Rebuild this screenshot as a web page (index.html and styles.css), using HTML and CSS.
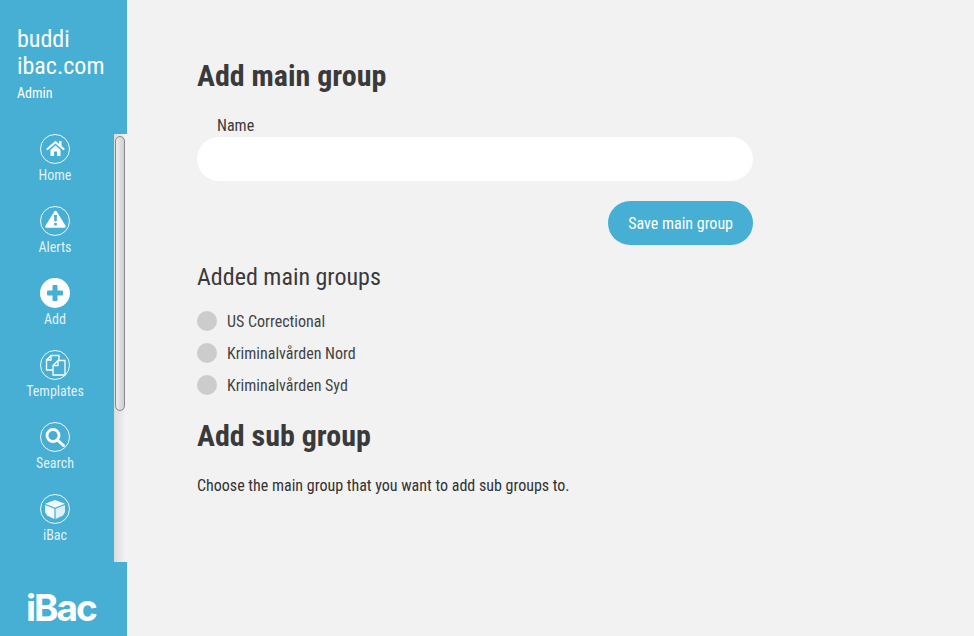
FILE: index.html
```html
<!DOCTYPE html>
<html lang="en">
<head>
    <meta charset="UTF-8">
    <title>Add main group</title>
    <link rel="stylesheet" href="styles.css">
</head>
<body>
    <aside class="sidebar">
        <div class="account">
            <div class="account-name">buddi<br>ibac.com</div>
            <div class="account-role">Admin</div>
        </div>
        <nav class="menu">
            <a class="menu-item"><span class="menu-icon"><svg viewBox="0 0 28 28"><path fill="none" stroke="#fff" stroke-width="2.200" stroke-linecap="round" d="M6.500 14 14.500 7.200 22.500 14"/><path fill="#fff" d="M18 6h2.500v5.500L18 9.500z"/><path fill="#fff" d="M9.500 15 14.500 10.500 19.500 15v6h-3.500v-4.500h-3V21H9.500z"/></svg></span><span>Home</span></a>
            <a class="menu-item"><span class="menu-icon"><svg viewBox="0 0 28 28"><path fill="#fff" stroke="#fff" stroke-width="2.500" stroke-linejoin="round" d="M14.500 5 23.500 19.500H5.500z"/><path fill="#47afd3" d="M13 8h3l-.4 6.500h-2.200zM13.200 16h2.600v2.600h-2.600z"/></svg></span><span>Alerts</span></a>
            <a class="menu-item"><span class="menu-icon menu-icon-active"><svg viewBox="0 0 28 28"><rect fill="#47afd3" x="6" y="11.500" width="16" height="5" rx="1"/><rect fill="#47afd3" x="11.500" y="6" width="5" height="16" rx="1"/></svg></span><span>Add</span></a>
            <a class="menu-item"><span class="menu-icon"><svg viewBox="0 0 28 28" fill="none" stroke="#fff" stroke-width="1.300"><path d="M12 19H5.500V9L10 4.500h8V9.500"/><path d="M10 4.500V9H5.500"/><path d="M17 9.500h7V24H12V14.500z"/><path d="M17 9.500v5h-5"/></svg></span><span>Templates</span></a>
            <a class="menu-item"><span class="menu-icon"><svg viewBox="0 0 28 28" fill="none" stroke="#fff"><circle cx="12" cy="12.500" r="6" stroke-width="2.800"/><path d="m17 17.500 5.500 5" stroke-width="3" stroke-linecap="round"/></svg></span><span>Search</span></a>
            <a class="menu-item"><span class="menu-icon"><svg viewBox="0 0 28 28" fill="#f2f9fc"><path d="M14 5 24 8.800 14 12.800 4 8.800z"/><path d="M4 10 13.400 13.800V24L6 20.500 4 17z"/><path fill="#dff0f7" d="M24 10 14.600 13.800V24L22 20.500 24 17z"/></svg></span><span>iBac</span></a>
        </nav>
        <div class="menu-track"><div class="menu-thumb"></div></div>
        <div class="brand">iBac</div>
    </aside>
    <main class="content">
        <h1>Add main group</h1>
        <label class="field-label" for="name">Name</label>
        <input class="field-input" id="name" type="text">
        <div class="form-actions"><button class="btn">Save main group</button></div>
        <h2>Added main groups</h2>
        <ul class="group-list">
            <li><span class="dot"></span>US Correctional</li>
            <li><span class="dot"></span>Kriminalvården Nord</li>
            <li><span class="dot"></span>Kriminalvården Syd</li>
        </ul>
        <h1 class="sub-title">Add sub group</h1>
        <p class="hint">Choose the main group that you want to add sub groups to.</p>
    </main>
</body>
</html>
```

FILE: styles.css
```css
* {
    box-sizing: border-box;
}
body {
    margin: 0;
    height: 636px;
    display: flex;
    overflow: hidden;
    background: #f2f2f2;
    color: #333;
    font-family: 'Roboto', sans-serif;
    font-stretch: 75%;
    font-size: 16px;
}
.sidebar {
    position: relative;
    width: 127px;
    height: 636px;
    flex: none;
    background: #47afd3;
    color: #fff;
}
.account {
    height: 134px;
    padding: 26px 0 0 17px;
}
.account-name {
    font-size: 24px;
    line-height: 27px;
}
.account-role {
    margin-top: 5px;
    font-size: 14px;
    line-height: 16px;
}
.menu {
    width: 110px;
    display: flex;
    flex-direction: column;
}
.menu-item {
    height: 72px;
    display: flex;
    flex-direction: column;
    align-items: center;
    font-size: 14px;
    line-height: 20px;
    color: rgba(255, 255, 255, 0.85);
}
.menu-icon {
    width: 30px;
    height: 30px;
    margin-bottom: 1px;
    display: flex;
    border: 1px solid rgba(255, 255, 255, 0.9);
    border-radius: 50%;
}
.menu-icon svg {
    width: 28px;
    height: 28px;
}
.menu-icon-active {
    background: #fff;
}
.menu-track {
    position: absolute;
    top: 134px;
    right: 0;
    width: 13px;
    height: 428px;
    background: linear-gradient(to right, #dcdcdc, #f4f4f4);
}
.menu-thumb {
    width: 10px;
    height: 275px;
    margin: 2px 0 0 1px;
    background: linear-gradient(to right, #ececec, #d0d0d0);
    border: 1px solid #888;
    border-radius: 5px;
}
.brand {
    position: absolute;
    left: 26px;
    bottom: 6px;
    font-family: 'Inter', sans-serif;
    font-stretch: normal;
    font-size: 37px;
    font-weight: 700;
    letter-spacing: -2px;
    line-height: 44px;
}
.content {
    flex: 1;
    padding: 58px 0 0 70px;
}
.content > * {
    width: 556px;
}
h1 {
    margin: 0;
    font-size: 30px;
    font-weight: 700;
    line-height: 36px;
    color: #3a3a3a;
}
.field-label {
    display: block;
    margin-top: 22px;
    padding-left: 20px;
    line-height: 19px;
    color: #3a3a3a;
}
.field-input {
    display: block;
    height: 44px;
    margin-top: 2px;
    border: 0;
    border-radius: 22px;
    background: #fff;
}
.form-actions {
    display: flex;
    justify-content: flex-end;
    margin-top: 20px;
}
.btn {
    height: 44px;
    padding: 0 20px;
    border: 0;
    border-radius: 22px;
    background: #47afd3;
    color: #fff;
    font: inherit;
    font-stretch: 75%;
}
h2 {
    margin: 18px 0 0;
    font-size: 24px;
    font-weight: 400;
    line-height: 28px;
    color: #3a3a3a;
}
.group-list {
    margin: 14px 0 0;
    padding: 0;
    list-style: none;
    color: #444;
}
.group-list li {
    display: flex;
    align-items: center;
    height: 32px;
    gap: 10px;
}
.dot {
    width: 20px;
    height: 20px;
    border-radius: 50%;
    background: #ccc;
}
.sub-title {
    margin-top: 17px;
}
.hint {
    margin: 22px 0 0;
    line-height: 19px;
}
```
